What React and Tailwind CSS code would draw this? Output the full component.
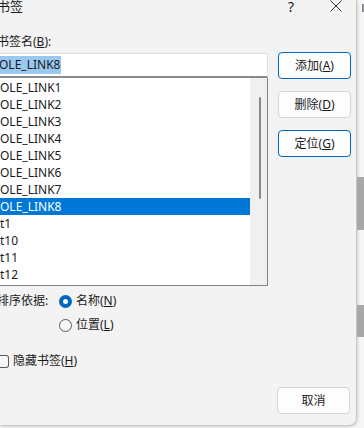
import React from 'react';

const FONT = { fontFamily: '"Noto Sans", "Noto Sans CJK SC", sans-serif' };

const items = [
  'OLE_LINK1', 'OLE_LINK2', 'OLE_LINK3', 'OLE_LINK4', 'OLE_LINK5', 'OLE_LINK6',
  'OLE_LINK7', 'OLE_LINK8', 't1', 't10', 't11', 't12',
];

const Btn = ({ label, hot, focus }) => {
  const i = label.indexOf('(');
  return (
    <button
      className={`w-[73px] h-[27px] rounded-[4px] bg-[#fdfdfd] text-[12px] text-[#1a1a1a] flex items-center justify-center ${
        focus ? 'border border-[#0067c0]' : 'border border-[#d4d4d4]'
      }`}
    >
      {hot ? (
        <span>
          {label.slice(0, i)}(<span className="underline">{hot}</span>)
        </span>
      ) : (
        label
      )}
    </button>
  );
};

export default function App() {
  return (
    <div className="w-[364px] h-[428px] flex bg-[#f7f7f7] overflow-hidden" style={FONT}>
      <div className="w-[357px] h-[426px] shrink-0 bg-[#f3f3f3] rounded-br-[8px] border-r border-b border-[#c8c8c8] shadow-[1px_1px_3px_rgba(0,0,0,0.15)] flex flex-col text-[12px] text-[#1a1a1a]">
        {/* title bar */}
        <div className="h-[20px] flex items-start -mt-[3px]">
          <span className="text-[13px] -ml-[3px]">书签</span>
          <span className="ml-auto mr-[36px] text-[14px] leading-[20px]">?</span>
          <svg width="12" height="12" viewBox="0 0 12 12" className="mr-[14px] mt-[3px]">
            <path d="M0.5 0.5 L11.5 11.5 M11.5 0.5 L0.5 11.5" stroke="#333" strokeWidth="1" />
          </svg>
        </div>

        <div className="flex mt-[16px]">
          <div className="w-[268px] flex flex-col">
            <div className="-ml-[3px] h-[18px] leading-[18px]">
              书签名(<span className="underline">B</span>):
            </div>
            <div className="mt-[2px] h-[25px] bg-white border-t border-r border-[#e0e0e0] border-b-2 border-b-[#8a8a8a] flex items-center">
              <span className="bg-[#99c9ef] h-[18px] leading-[18px] pr-[1px] -ml-[1px]">OLE_LINK8</span>
            </div>
            <div className="h-[208px] bg-white border-r border-b border-[#828282] flex">
              <div className="flex-1 flex flex-col pt-[1px]">
                {items.map((t) => (
                  <div
                    key={t}
                    className={`h-[17px] leading-[17px] -ml-[1px] pl-[1px] ${
                      t === 'OLE_LINK8' ? 'bg-[#0078d7] text-white' : ''
                    }`}
                  >
                    {t}
                  </div>
                ))}
              </div>
              <div className="w-[17px] bg-[#f0f0f0] flex justify-center pt-[19px]">
                <div className="w-[2px] h-[102px] bg-[#8a8a8a] rounded-full ml-[2px]" />
              </div>
            </div>
          </div>

          <div className="ml-[10px] flex flex-col gap-[12px] pt-[19px]">
            <Btn label="添加(A)" hot="A" focus />
            <Btn label="删除(D)" hot="D" />
            <Btn label="定位(G)" hot="G" focus />
          </div>
        </div>

        {/* sort */}
        <div className="flex">
          <div className="-ml-[3px] w-[58px] h-[18px] leading-[18px] mt-[6px]">排序依据:</div>
          <div className="flex flex-col gap-[6px] mt-[6px] ml-[4px]">
            <div className="flex items-center gap-[4px] h-[18px]">
              <span className="w-[13px] h-[13px] rounded-full bg-[#0067c0] flex items-center justify-center">
                <span className="w-[5px] h-[5px] rounded-full bg-white" />
              </span>
              <span>
                名称(<span className="underline">N</span>)
              </span>
            </div>
            <div className="flex items-center gap-[4px] h-[18px]">
              <span className="w-[13px] h-[13px] rounded-full border border-[#5a5a5a] bg-[#f7f7f7]" />
              <span>
                位置(<span className="underline">L</span>)
              </span>
            </div>
          </div>
        </div>

        <div className="flex items-center gap-[4px] mt-[18px] h-[18px]">
          <span className="w-[9px] h-[13px] rounded-r-[3px] border border-l-0 border-[#5a5a5a] bg-[#f7f7f7]" />
          <span>
            隐藏书签(<span className="underline">H</span>)
          </span>
        </div>

        <div className="mt-auto mb-[11px] flex justify-end pr-[6px]">
          <Btn label="取消" />
        </div>
      </div>

      {/* document strip */}
      <div className="flex-1 flex flex-col">
        <div className="h-[20px] text-[11px] text-[#333] pl-[2px]">Ⅱ</div>
        <div className="h-[157px]" />
        <div className="h-[53px] bg-[#a8a8a8]" />
        <div className="h-[75px]" />
        <div className="h-[32px] bg-[#a8a8a8]" />
      </div>
    </div>
  );
}
